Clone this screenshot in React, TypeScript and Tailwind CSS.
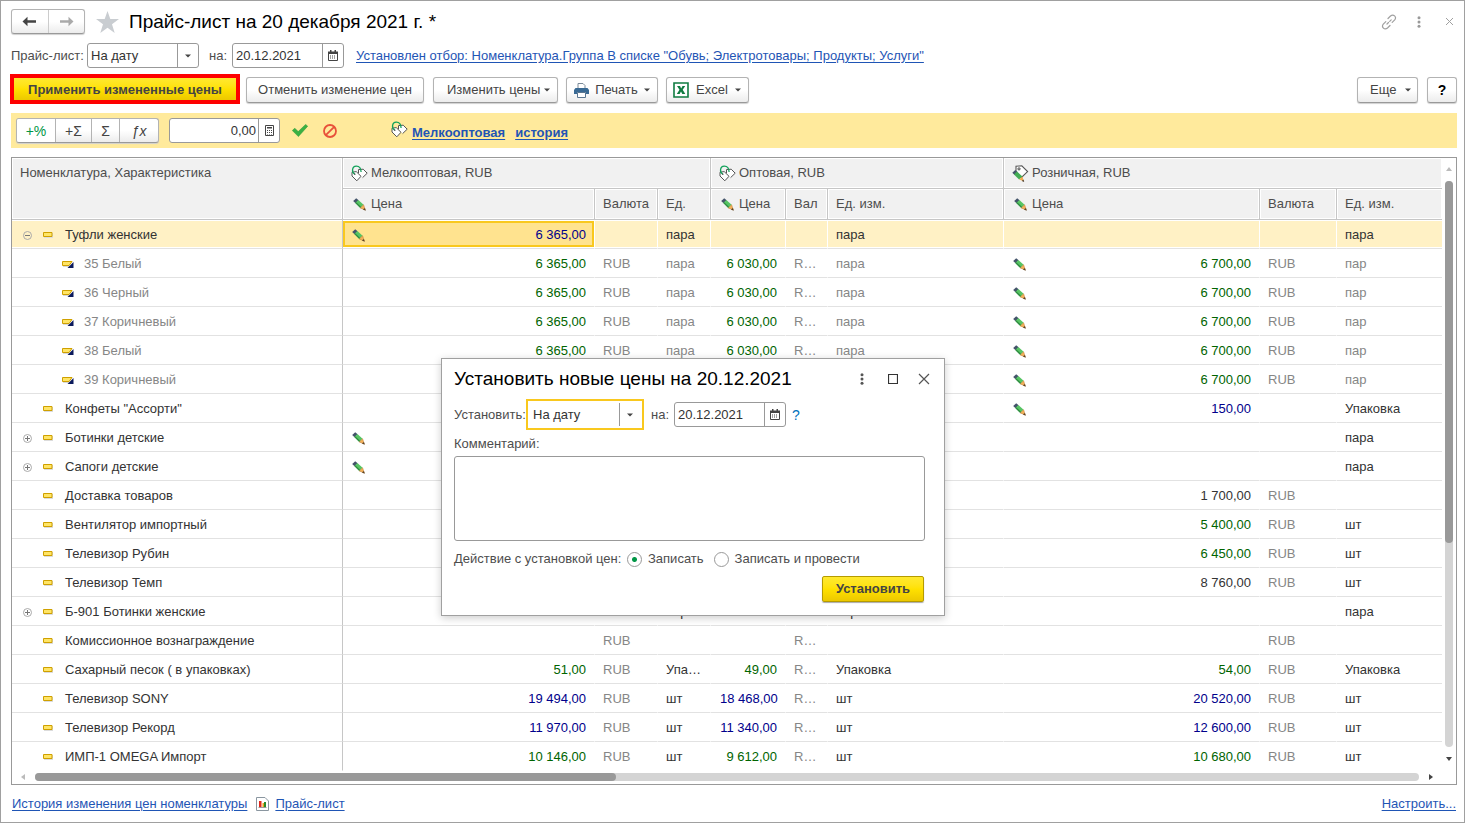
import type { ReactNode } from "react";

type Tone = "green" | "blue";
type Price = { value?: string; tone?: Tone; edited?: boolean; currency?: string; unit?: string };
type Row = {
  name: string;
  child?: boolean;
  toggle?: "open" | "closed";
  selected?: boolean;
  prices: [Price, Price, Price];
};

const none: Price = {};

const shoe = (name: string, wholesale = true): Row => ({
  name,
  child: true,
  prices: [
    wholesale ? { value: "6 365,00", tone: "green", currency: "RUB", unit: "пара" } : none,
    wholesale ? { value: "6 030,00", tone: "green", currency: "RUB", unit: "пара" } : none,
    { value: "6 700,00", tone: "green", edited: true, currency: "RUB", unit: "пар" },
  ],
});

const rows: Row[] = [
  {
    name: "Туфли женские",
    toggle: "open",
    selected: true,
    prices: [{ value: "6 365,00", tone: "blue", edited: true, unit: "пара" }, { unit: "пара" }, { unit: "пара" }],
  },
  shoe("35 Белый"),
  shoe("36 Черный"),
  shoe("37 Коричневый"),
  shoe("38 Белый"),
  shoe("39 Коричневый", false),
  { name: 'Конфеты "Ассорти"', prices: [none, none, { value: "150,00", tone: "blue", edited: true, unit: "Упаковка" }] },
  { name: "Ботинки детские", toggle: "closed", prices: [{ edited: true }, none, { unit: "пара" }] },
  { name: "Сапоги детские", toggle: "closed", prices: [{ edited: true }, none, { unit: "пара" }] },
  { name: "Доставка товаров", prices: [none, none, { value: "1 700,00", currency: "RUB" }] },
  { name: "Вентилятор импортный", prices: [none, none, { value: "5 400,00", tone: "green", currency: "RUB", unit: "шт" }] },
  { name: "Телевизор Рубин", prices: [none, none, { value: "6 450,00", tone: "green", currency: "RUB", unit: "шт" }] },
  { name: "Телевизор Темп", prices: [none, none, { value: "8 760,00", currency: "RUB", unit: "шт" }] },
  { name: "Б-901 Ботинки женские", toggle: "closed", prices: [{ unit: "пара" }, { unit: "пара" }, { unit: "пара" }] },
  { name: "Комиссионное вознаграждение", prices: [{ currency: "RUB" }, { currency: "RUB" }, { currency: "RUB" }] },
  {
    name: "Сахарный песок ( в упаковках)",
    prices: [
      { value: "51,00", tone: "green", currency: "RUB", unit: "Упаковка" },
      { value: "49,00", tone: "green", currency: "RUB", unit: "Упаковка" },
      { value: "54,00", tone: "green", currency: "RUB", unit: "Упаковка" },
    ],
  },
  {
    name: "Телевизор SONY",
    prices: [
      { value: "19 494,00", tone: "blue", currency: "RUB", unit: "шт" },
      { value: "18 468,00", tone: "blue", currency: "RUB", unit: "шт" },
      { value: "20 520,00", tone: "blue", currency: "RUB", unit: "шт" },
    ],
  },
  {
    name: "Телевизор Рекорд",
    prices: [
      { value: "11 970,00", tone: "blue", currency: "RUB", unit: "шт" },
      { value: "11 340,00", tone: "blue", currency: "RUB", unit: "шт" },
      { value: "12 600,00", tone: "blue", currency: "RUB", unit: "шт" },
    ],
  },
  {
    name: "ИМП-1 OMEGA Импорт",
    prices: [
      { value: "10 146,00", tone: "green", currency: "RUB", unit: "шт" },
      { value: "9 612,00", tone: "green", currency: "RUB", unit: "шт" },
      { value: "10 680,00", tone: "green", currency: "RUB", unit: "шт" },
    ],
  },
];

/* ---------- icons ---------- */

const Pencil = () => (
  <svg width="13" height="13" viewBox="0 0 13 13" className="shrink-0" aria-hidden="true">
    <path d="M.2 3 3.200.2 5.600 2.300 2.500 5.300z" fill="#44546a" />
    <path d="M2.300 5.100 5.400 2.100 10.600 6.800 7.300 10z" fill="#56c463" />
    <path d="M2.300 5.100 3.200 4.200 8.200 9.100 7.300 10z" fill="#2f8a40" />
    <path d="M7.300 10 10.600 6.800 12.300 12z" fill="#f4b25a" stroke="#b9772a" strokeWidth="0.500" />
    <path d="M12.800 12.700 9.900 11.600 11.900 9.900z" fill="#5a4226" />
  </svg>
);

const Tags = () => (
  <svg width="17" height="17" viewBox="0 0 17 17" className="shrink-0" fill="none" aria-hidden="true">
    <path d="M7.500 8.200V4.600L12.200 4.200 16.200 8.200 11.600 12.600" fill="#fff" stroke="#555" strokeWidth="1" />
    <path d="M1 7.200 5.200 6.600 10 11.300 5.800 15.800 1 11z" fill="#fff" stroke="#555" strokeWidth="1" />
    <path d="M3.800 9.200C.4 7.500.8 1.300 5.200 1.100c3.400-.1 4.800 2.900 4.900 6" stroke="#12a15a" strokeWidth="1.300" />
    <circle cx="3.800" cy="9.300" r=".8" fill="#555" />
  </svg>
);

const TagPencil = () => (
  <svg width="17" height="17" viewBox="0 0 17 17" className="shrink-0" fill="none" aria-hidden="true">
    <path d="M4 1.200 9.800.8 15.600 6.600 9.500 12.500 4 7z" fill="#fff" stroke="#555" strokeWidth="1.100" />
    <circle cx="7" cy="3.900" r="1.100" stroke="#444" />
    <path d="M.3 7.800 3.300 5 5.600 7 2.600 9.900z" fill="#44546a" />
    <path d="M2 9.500 5 6.400 10.400 11.400 7.100 14.500z" fill="#43ad55" />
    <path d="M7.100 14.500 10.400 11.400 11.800 16.200z" fill="#f2ab4e" />
    <path d="M12.200 16.900 9.800 15.900 11.500 14.400z" fill="#4a3a2a" />
  </svg>
);

const Caret = () => (
  <svg width="6" height="4" viewBox="0 0 6 4" className="shrink-0" aria-hidden="true">
    <path d="M0 .5h6L3 3.500z" fill="#444" />
  </svg>
);

const Calendar = () => (
  <svg width="10" height="11" viewBox="0 0 10 11" aria-hidden="true">
    <path d="M.5 2.500h9v8h-9z" fill="#fff" stroke="#444" />
    <path d="M0 1.500h10V4H0zM2 0h1.500v2H2zM6.500 0H8v2H6.500z" fill="#444" />
    <path d="M2 5.500h1v1H2zM4 5.500h1v1H4zM6 5.500h1v1H6zM2 7.500h1v1H2zM4 7.500h1v1H4zM6 7.500h1v1H6z" fill="#444" />
  </svg>
);

const Calculator = () => (
  <svg width="9" height="11" viewBox="0 0 9 11" aria-hidden="true">
    <path d="M.5.5h8v10h-8z" fill="#fff" stroke="#444" />
    <path d="M2 2h5v1.500H2zM2 5h1v1H2zM4 5h1v1H4zM6 5h1v1H6zM2 7h1v1H2zM4 7h1v1H4zM6 7h1v1H6zM2 9h1v.6H2zM4 9h1v.6H4zM6 9h1v.6H6z" fill="#444" />
  </svg>
);

const Arrow = ({ flip, className }: { flip?: boolean; className: string }) => (
  <svg width="15" height="11" viewBox="0 0 15 11" className={className} aria-hidden="true">
    <path d={flip ? "M14.500 5.500 9.500.8v3.400H1v2.600h8.500v3.400z" : "M.5 5.500 5.500.8v3.400H14v2.600H5.500v3.400z"} fill="currentColor" />
  </svg>
);

const Dots = ({ className }: { className: string }) => (
  <svg width="4" height="12" viewBox="0 0 4 12" className={className} fill="currentColor" aria-hidden="true">
    <circle cx="2" cy="1.700" r="1.500" />
    <circle cx="2" cy="6" r="1.500" />
    <circle cx="2" cy="10.300" r="1.500" />
  </svg>
);

const Toggle = ({ open }: { open: boolean }) => (
  <svg width="11" height="11" viewBox="0 0 11 11" fill="none" aria-hidden="true">
    <circle cx="5.500" cy="5.500" r="4" stroke="#aaa" />
    <path d={open ? "M3 5.500h5" : "M3 5.500h5M5.500 3v5"} stroke="#777" />
  </svg>
);

const ItemMark = () => (
  <svg width="10" height="6" viewBox="0 0 10 6" className="shrink-0" aria-hidden="true">
    <path d="M1 1h9v5H1z" fill="#dcdcdc" />
    <path d="M.5.5h8.500v4H.5z" fill="#ffe566" stroke="#cfa000" />
  </svg>
);

const VariantMark = () => (
  <svg width="12" height="7" viewBox="0 0 12 7" className="shrink-0" aria-hidden="true">
    <path d="M1 4.500h7v1.500H1z" fill="#d8d8d8" />
    <path d="M.5.500h9.500L7 4.500H.5z" fill="#ffe566" stroke="#cfa000" />
    <path d="M11.500 1v6H5.500z" fill="#0b1a5c" />
  </svg>
);

/* ---------- controls ---------- */

const raised =
  "border border-[#b3b3b3] border-b-[#999] rounded-[3px] bg-linear-to-b from-white from-50% to-[#ececec] shadow-[0_1px_1px_#d0d0d0]";

const ToolButton = ({ children, className }: { children: ReactNode; className: string }) => (
  <button type="button" className={`${raised} flex h-[26px] items-center text-[#444] ${className}`}>
    {children}
  </button>
);

const DateField = ({ id }: { id: string }) => (
  <div className="flex h-[25px] w-28 overflow-hidden rounded-[3px] border border-[#999] bg-white">
    <input id={id} defaultValue="20.12.2021" className="min-w-0 flex-1 pl-[3px] text-[#333] outline-none" />
    <button type="button" aria-label="Выбрать дату" className="flex w-[21px] items-center justify-center border-l border-[#999]">
      <Calendar />
    </button>
  </div>
);

const ModeSelect = ({ id, focused }: { id: string; focused?: boolean }) => (
  <div
    className={
      focused
        ? "flex h-[31px] w-[118px] items-center border-2 border-[#f9c81e] bg-white py-0.5 pr-0.5"
        : "flex h-[25px] w-28 items-center overflow-hidden rounded-[3px] border border-[#999] bg-white"
    }
  >
    <select id={id} className={`h-full min-w-0 flex-1 appearance-none text-[#333] outline-none ${focused ? "pl-[5px]" : "pl-[3px]"}`}>
      <option>На дату</option>
    </select>
    <span className="flex h-full w-[21px] items-center justify-center border-l border-[#999]">
      <Caret />
    </span>
  </div>
);

const link = "text-[#1f55b5] underline underline-offset-2";

/* ---------- table ---------- */

const toneClass = (tone?: Tone) => (tone === "green" ? "text-[#006400]" : tone === "blue" ? "text-[#00008b]" : "text-[#333]");

const th = "border-r border-b border-[#c6c6c6] bg-[#f1f1f1] shadow-[inset_0_0_0_1px_#fff] text-left font-normal whitespace-nowrap overflow-hidden px-2 h-[31px]";

const HeadLabel = ({ icon, children }: { icon: ReactNode; children: ReactNode }) => (
  <span className="flex items-center gap-1">
    <span className="flex w-4 shrink-0 items-center justify-center">{icon}</span>
    {children}
  </span>
);

function PriceCells({ price, row, first, last }: { price: Price; row: Row; first: boolean; last: boolean }) {
  const bg = row.selected ? "bg-[#fff1c5] shadow-[inset_0_1px_#fff,inset_0_-1px_#fff]" : "";
  const cell = `h-[29px] overflow-hidden text-ellipsis whitespace-nowrap border-b border-b-[#e2e2e2] ${bg}`;
  const active = row.selected && first;
  const muted = row.child ? "text-[#868686]" : "text-[#333]";
  return (
    <>
      <td className={`${cell} border-r border-r-white ${active ? "p-0" : "px-2 pt-0.5"} ${toneClass(price.tone)}`}>
        <div className={`flex items-center ${active ? "h-[26px] border-2 border-[#f9c81e] bg-[#ffe38f] pt-0.5 pr-[6px] pl-[7px]" : "pl-px"}`}>
          {price.edited && <Pencil />}
          <span className="ml-auto">{price.value}</span>
        </div>
      </td>
      <td className={`${cell} border-r border-r-white px-2 pt-0.5 text-[#868686]`}>{price.currency}</td>
      <td className={`${cell} px-2 pt-0.5 ${last ? "" : "border-r border-r-white"} ${muted}`}>{price.unit}</td>
    </>
  );
}

function PriceTable() {
  return (
    <table className="w-full table-fixed border-separate border-spacing-0 text-[#4d4d4d]">
      <colgroup>
        <col className="w-[331px]" />
        <col className="w-[252px]" />
        <col className="w-[63px]" />
        <col className="w-[53px]" />
        <col className="w-[75px]" />
        <col className="w-[42px]" />
        <col className="w-[176px]" />
        <col className="w-[256px]" />
        <col className="w-[77px]" />
        <col />
      </colgroup>
      <thead>
        <tr>
          <th rowSpan={2} className={`${th} pt-[7px] align-top`}>Номенклатура, Характеристика</th>
          <th colSpan={3} className={th}><HeadLabel icon={<Tags />}>Мелкооптовая, RUB</HeadLabel></th>
          <th colSpan={3} className={th}><HeadLabel icon={<Tags />}>Оптовая, RUB</HeadLabel></th>
          <th colSpan={3} className={`${th} border-r-0`}><HeadLabel icon={<TagPencil />}>Розничная, RUB</HeadLabel></th>
        </tr>
        <tr>
          <th className={th}><HeadLabel icon={<Pencil />}>Цена</HeadLabel></th>
          <th className={th}>Валюта</th>
          <th className={th}>Ед.</th>
          <th className={th}><HeadLabel icon={<Pencil />}>Цена</HeadLabel></th>
          <th className={th}>Вал</th>
          <th className={th}>Ед. изм.</th>
          <th className={th}><HeadLabel icon={<Pencil />}>Цена</HeadLabel></th>
          <th className={th}>Валюта</th>
          <th className={`${th} border-r-0`}>Ед. изм.</th>
        </tr>
      </thead>
      <tbody className="[&>tr:last-child>td]:border-b-transparent">
        {rows.map((row) => (
          <tr key={row.name}>
            <td
              className={`h-[29px] border-r border-b border-r-[#c6c6c6] border-b-[#e2e2e2] pt-0.5 ${
                row.selected ? "bg-[#fff1c5] shadow-[inset_0_1px_#fff,inset_0_-1px_#fff]" : ""
              }`}
            >
              {row.child ? (
                <span className="flex items-center gap-[10px] pl-[50px] text-[#868686]">
                  <VariantMark />
                  {row.name}
                </span>
              ) : (
                <span className="flex items-center pl-[10px] text-[#333]">
                  {row.toggle ? (
                    <button type="button" aria-label="Развернуть" className="mr-[10px] w-[11px]">
                      <Toggle open={row.toggle === "open"} />
                    </button>
                  ) : (
                    <span className="mr-[10px] w-[11px]" />
                  )}
                  <ItemMark />
                  <span className="ml-3">{row.name}</span>
                </span>
              )}
            </td>
            {row.prices.map((price, i) => (
              <PriceCells key={i} price={price} row={row} first={i === 0} last={i === 2} />
            ))}
          </tr>
        ))}
      </tbody>
    </table>
  );
}

/* ---------- dialog ---------- */

function PriceDialog() {
  return (
    <section
      role="dialog"
      aria-labelledby="dialog-title"
      className="absolute top-[357px] left-[440px] flex w-[504px] flex-col border border-[#a0a0a0] bg-white pt-2 pr-[19px] pb-[13px] pl-3 text-[#4d4d4d] shadow-[0_2px_8px_rgba(0,0,0,0.2)]"
    >
      <header className="-mr-[5px] flex h-6 items-center">
        <h2 id="dialog-title" className="flex-1 text-[19px] leading-6 text-black">Установить новые цены на 20.12.2021</h2>
        <button type="button" aria-label="Меню"><Dots className="text-[#555]" /></button>
        <button type="button" aria-label="Развернуть окно" className="ml-6">
          <svg width="10" height="10" viewBox="0 0 10 10"><path d="M.5.5h9v9h-9z" fill="none" stroke="#333" strokeWidth="1.200" /></svg>
        </button>
        <button type="button" aria-label="Закрыть окно" className="ml-5">
          <svg width="12" height="12" viewBox="0 0 12 12"><path d="M1 1l10 10M11 1 1 11" stroke="#555" strokeWidth="1.200" /></svg>
        </button>
      </header>
      <div className="mt-2 flex items-center">
        <label htmlFor="set-mode" className="w-[72px]">Установить:</label>
        <ModeSelect id="set-mode" focused />
        <label htmlFor="set-date" className="ml-[7px] w-[23px]">на:</label>
        <DateField id="set-date" />
        <button type="button" className="ml-[6px] text-sm text-[#0072bc]">?</button>
      </div>
      <label htmlFor="comment" className="mt-[6px]">Комментарий:</label>
      <textarea id="comment" className="mt-1 h-[85px] w-full resize-none rounded-[3px] border border-[#999] outline-none" />
      <fieldset className="mt-[10px] flex items-center">
        <legend className="float-left w-[173px]">Действие с установкой цен:</legend>
        <label className="flex items-center gap-[6px]">
          <input type="radio" name="action" defaultChecked className="h-[15px] w-[15px] appearance-none rounded-full border border-[#999] checked:bg-[radial-gradient(circle,#009646_2px,#fff_3px)]" />
          Записать
        </label>
        <label className="ml-[10px] flex items-center gap-[6px]">
          <input type="radio" name="action" className="h-[15px] w-[15px] appearance-none rounded-full border border-[#999] checked:bg-[radial-gradient(circle,#009646_2px,#fff_3px)]" />
          Записать и провести
        </label>
      </fieldset>
      <button type="button" className="mt-[9px] mr-px h-[26px] w-[102px] self-end rounded-[2px] border border-[#b59b00] bg-linear-to-b from-[#ffe92e] via-[#ffe100] to-[#ecc800] font-bold text-[#444] shadow-[0_1px_1px_#aaa]">
        Установить
      </button>
    </section>
  );
}

export default function App() {
  return (
    <div className="relative flex min-h-screen flex-col border border-[#a0a0a0] bg-white pr-[7px] pl-[10px] font-['Liberation_Sans',Arial,sans-serif] text-[13px] leading-4 text-[#4d4d4d]">
      <header className="mt-2 flex h-[25px] items-center">
        <div className={`${raised} flex h-[25px] w-[74px]`}>
          <button type="button" aria-label="Назад" className="flex flex-1 items-center justify-center border-r border-[#ccc]">
            <Arrow className="text-[#444]" />
          </button>
          <button type="button" aria-label="Вперед" className="flex flex-1 items-center justify-center">
            <Arrow flip className="text-[#aaa]" />
          </button>
        </div>
        <button type="button" aria-label="В избранное" className="ml-[11px]">
          <svg width="23" height="22" viewBox="0 0 23 22">
            <path d="M11.500 0l2.800 8H23l-7 5.200L18.700 22l-7.200-5.300L4.300 22 7 13.200 0 8h8.700z" fill="#c9cdd1" />
          </svg>
        </button>
        <h1 className="ml-[10px] flex-1 text-[19px] leading-6 text-black">Прайс-лист на 20 декабря 2021 г. *</h1>
        <button type="button" aria-label="Получить ссылку">
          <svg width="16" height="16" viewBox="0 0 16 16" fill="none" stroke="#a0a0a0" strokeWidth="1.200" strokeLinecap="round">
            <path d="M7 4.500 9.500 2c3-2.500 6.500 1 4.200 3.900L11.200 8.400M9 11.500 6.500 14c-3 2.500-6.500-1-4.200-3.900L4.800 7.600M6 10l1.500-1.500M8.700 7.300 10.200 5.800" />
          </svg>
        </button>
        <button type="button" aria-label="Меню окна" className="ml-5"><Dots className="text-[#999]" /></button>
        <button type="button" aria-label="Закрыть" className="mr-[3px] ml-6">
          <svg width="9" height="9" viewBox="0 0 9 9"><path d="M1 1l7 7M8 1 1 8" stroke="#a0a0a0" /></svg>
        </button>
      </header>

      <div className="mt-[9px] flex items-center">
        <label htmlFor="list-mode" className="w-[76px]">Прайс-лист:</label>
        <ModeSelect id="list-mode" />
        <label htmlFor="list-date" className="ml-[10px] w-[23px]">на:</label>
        <DateField id="list-date" />
        <a href="#filter" className={`${link} ml-3`}>
          Установлен отбор: Номенклатура.Группа В списке "Обувь; Электротовары; Продукты; Услуги"
        </a>
      </div>

      <div className="mt-[6px] -ml-px flex items-center">
        <button type="button" className="mb-0.5 h-[30px] w-[230px] border-4 border-[#fe0000] bg-linear-to-b from-[#ffe92e] via-[#ffe100] to-[#ecc800] pt-0.5 font-bold text-[#444]">
          Применить измененные цены
        </button>
        <ToolButton className="ml-[6px] w-[178px] justify-center">Отменить изменение цен</ToolButton>
        <ToolButton className="ml-[9px] w-[125px] justify-between pr-[7px] pl-[13px]">Изменить цены <Caret /></ToolButton>
        <ToolButton className="ml-2 w-[92px] justify-between pr-[7px] pl-[7px]">
          <svg width="15" height="15" viewBox="0 0 15 15" aria-hidden="true">
            <path d="M4 5V.5h5l2 2V5" fill="#fff" stroke="#7b8a99" />
            <path d="M1.500 5h12L15 7v4h-3V9.500H3V11H0V7z" fill="#3a6a94" />
            <path d="M3.500 9.500h8v5h-8z" fill="#fff" stroke="#5b7690" />
          </svg>
          Печать <Caret />
        </ToolButton>
        <ToolButton className="ml-2 w-[83px] justify-between pr-[7px] pl-[6px]">
          <svg width="16" height="16" viewBox="0 0 16 16" aria-hidden="true">
            <path d="M1 1h14v14H1z" fill="#fff" stroke="#107c41" strokeWidth="1.600" />
            <path d="M4 4h3l1.200 2.400L9.500 4h2.700L9.700 7.800 12.300 12h-3L8 9.400 6.600 12H3.800l2.700-4.200z" fill="#107c41" />
          </svg>
          Excel <Caret />
        </ToolButton>
        <span className="flex-1" />
        <ToolButton className="w-[61px] justify-between pr-[6px] pl-3">Еще <Caret /></ToolButton>
        <ToolButton className="ml-[9px] w-[30px] justify-center"><span className="text-sm font-bold text-black">?</span></ToolButton>
      </div>

      <div className="mt-[7px] flex h-[35px] items-center bg-[#ffea9c] pl-[5px]">
        <div className={`${raised} flex h-[25px] w-[143px] overflow-hidden text-sm text-[#444]`}>
          <button type="button" className="w-[39px] border-r border-[#b3b3b3] bg-white text-[#009646]">+%</button>
          <button type="button" className="w-9 border-r border-[#b3b3b3]">+Σ</button>
          <button type="button" className="w-7 border-r border-[#b3b3b3]">Σ</button>
          <button type="button" className="flex-1 italic">ƒx</button>
        </div>
        <div className="ml-[10px] flex h-[25px] w-[111px] overflow-hidden rounded-[3px] border border-[#999] bg-white">
          <input aria-label="Значение" defaultValue="0,00" className="min-w-0 flex-1 pr-0.5 text-right text-[#333] outline-none" />
          <button type="button" aria-label="Калькулятор" className="flex w-[21px] items-center justify-center border-l border-[#999]">
            <Calculator />
          </button>
        </div>
        <button type="button" aria-label="Применить" className="ml-3">
          <svg width="16" height="13" viewBox="0 0 16 13"><path d="M.3 6.500 2.800 4.200l3.400 3.400L13.600.4l2.100 1.800L6.400 12.600z" fill="#3bb143" stroke="#2a9636" strokeWidth=".5" /></svg>
        </button>
        <button type="button" aria-label="Отменить" className="ml-[15px]">
          <svg width="14" height="14" viewBox="0 0 14 14" fill="none" stroke="#e8513a" strokeWidth="1.800"><circle cx="7" cy="7" r="6" /><path d="M2.800 11.200l8.400-8.400" /></svg>
        </button>
        <span className="mr-1 ml-[54px] pb-0.5"><Tags /></span>
        <a href="#price-type" className={`${link} pt-1 font-bold`}>Мелкооптовая</a>
        <a href="#history" className={`${link} ml-[10px] pt-1 font-bold`}>история</a>
      </div>

      <main className="mt-[9px] border border-[#999]">
        <div className="flex">
          <div className="min-w-0 flex-1"><PriceTable /></div>
          <div className="flex w-[14px] flex-col items-center pr-px">
            <svg width="6" height="4" viewBox="0 0 6 4" className="mt-[9px]"><path d="M0 4h6L3 0z" fill="#bbb" /></svg>
            <div className="mt-[10px] mb-[10px] w-2 flex-1 rounded-full bg-[#d4d4d4]">
              <div className="h-[64%] rounded-full bg-[#999]" />
            </div>
            <svg width="6" height="4" viewBox="0 0 6 4" className="mb-[10px]"><path d="M0 0h6L3 4z" fill="#444" /></svg>
          </div>
        </div>
        <div className="flex h-[13px] items-center pr-[23px] pb-px pl-[9px]">
          <svg width="4" height="6" viewBox="0 0 4 6"><path d="M4 0v6L0 3z" fill="#bbb" /></svg>
          <div className="mr-[10px] ml-[10px] h-2 flex-1 rounded-full bg-[#d4d4d4]">
            <div className="h-2 w-[42%] rounded-full bg-[#999]" />
          </div>
          <svg width="4" height="6" viewBox="0 0 4 6"><path d="M0 0v6l4-3z" fill="#444" /></svg>
        </div>
      </main>

      <footer className="flex flex-1 items-center pr-px pl-px">
        <a href="#history-all" className={link}>История изменения цен номенклатуры</a>
        <svg width="13" height="14" viewBox="0 0 13 14" className="mr-[6px] ml-[9px]" aria-hidden="true">
          <path d="M.5.5h8.500l3.500 3.500v9.500H.5z" fill="#fff" stroke="#8a96a0" />
          <path d="M3 4h2.500v6H3z" fill="#e0271c" />
          <path d="M6.500 6h1.500v4H6.500z" fill="#e8a020" />
          <path d="M8 5h2v5H8z" fill="#2a8a2a" />
          <path d="M2.500 10.500h8" stroke="#999" />
        </svg>
        <a href="#price-list" className={link}>Прайс-лист</a>
        <a href="#settings" className={`${link} ml-auto`}>Настроить...</a>
      </footer>

      <PriceDialog />
    </div>
  );
}
